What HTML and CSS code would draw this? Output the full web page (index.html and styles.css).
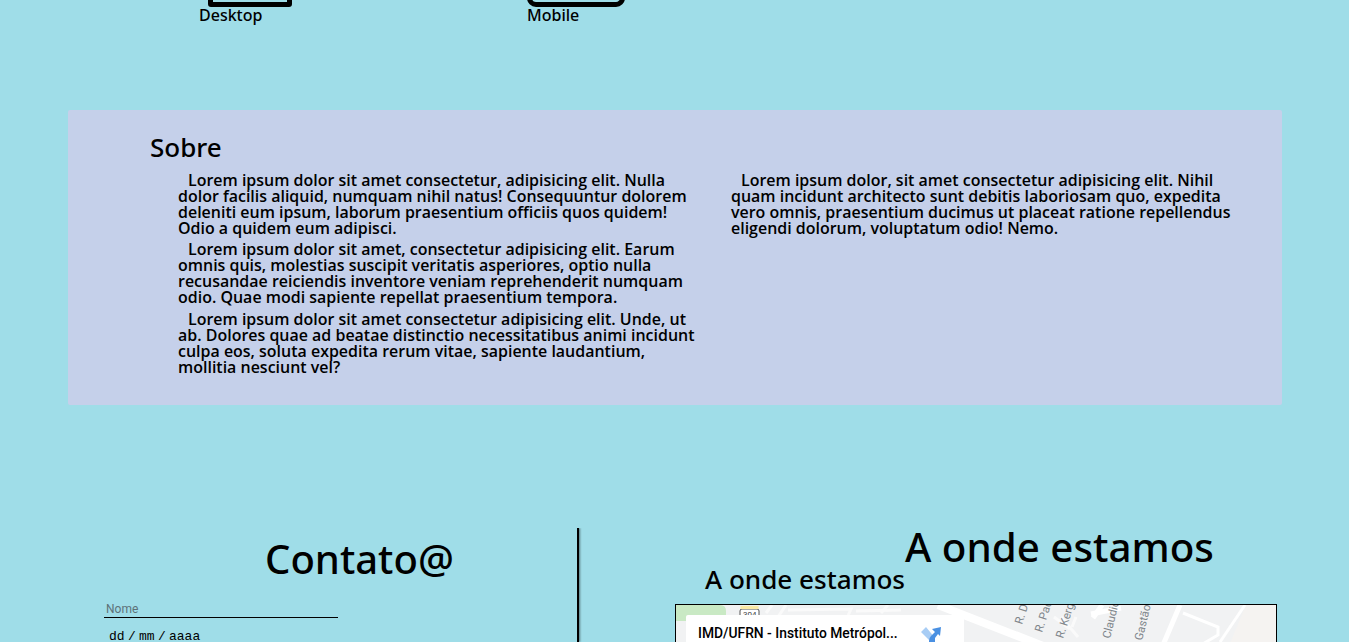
FILE: index.html
```html
<!DOCTYPE html>
<html lang="pt-BR">
<head>
<meta charset="utf-8">
<title>Sobre</title>
<link rel="stylesheet" href="styles.css">
</head>
<body>
<section class="devices">
  <div class="device device-desktop">
    <div class="device-cut"><div class="shape shape-desktop"></div></div>
    <span class="device-label">Desktop</span>
  </div>
  <div class="device device-mobile">
    <div class="device-cut"><div class="shape shape-mobile"></div></div>
    <span class="device-label">Mobile</span>
  </div>
</section>

<section class="about">
  <h2 class="about-title">Sobre</h2>
  <div class="about-cols">
    <div class="about-left">
      <p>Lorem ipsum dolor sit amet consectetur, adipisicing elit. Nulla dolor facilis aliquid, numquam nihil natus! Consequuntur dolorem deleniti eum ipsum, laborum praesentium officiis quos quidem! Odio a quidem eum adipisci.</p>
      <p>Lorem ipsum dolor sit amet, consectetur adipisicing elit. Earum omnis quis, molestias suscipit veritatis asperiores, optio nulla recusandae reiciendis inventore veniam reprehenderit numquam odio. Quae modi sapiente repellat praesentium tempora.</p>
      <p>Lorem ipsum dolor sit amet consectetur adipisicing elit. Unde, ut ab. Dolores quae ad beatae distinctio necessitatibus animi incidunt culpa eos, soluta expedita rerum vitae, sapiente laudantium, mollitia nesciunt vel?</p>
    </div>
    <div class="about-right">
      <p>Lorem ipsum dolor, sit amet consectetur adipisicing elit. Nihil quam incidunt architecto sunt debitis laboriosam quo, expedita vero omnis, praesentium ducimus ut placeat ratione repellendus eligendi dolorum, voluptatum odio! Nemo.</p>
    </div>
  </div>
</section>

<section class="bottom">
  <div class="contact">
    <h1 class="contact-title">Contato@</h1>
    <div class="field field-name"><span class="placeholder">Nome</span></div>
    <div class="field-date">dd / mm / aaaa</div>
  </div>
  <div class="where">
    <h1 class="where-title">A onde estamos</h1>
    <h2 class="where-sub">A onde estamos</h2>
    <div class="map">
      <svg class="map-art" viewBox="0 0 600 60" width="600" height="60" aria-hidden="true">
        <rect width="600" height="60" fill="#f1f2f3"/>
        <path d="M570 0 H600 V60 H545z" fill="#f5f3f1"/>
        <path d="M0 0h44q6 0 6 6v10H0z" fill="#c9e9c4"/>
        <g fill="none" stroke="#fafafa" stroke-width="3">
          <path d="M90 8 L96 0"/><path d="M102 12 L110 0"/><path d="M112 5 L175 4 L170 15"/>
          <path d="M205 8 L212 0"/><path d="M180 6 L225 5"/>
          <path d="M385 12 L402 32"/><path d="M378 12 L394 24"/><path d="M400 12 L396 22"/>
        </g>
        <g fill="none" stroke="#fff" stroke-width="8">
          <path d="M262 0 L380 46"/>
        </g>
        <g fill="none" stroke="#fff" stroke-width="5">
          <path d="M504 0 L487 40"/><path d="M417 13 L426 0"/><path d="M415 9 L445 3"/>
        </g>
        <g fill="none" stroke="#fff" stroke-width="3">
          <path d="M507 8 L542 22 L542 30 L525 40"/>
          <path d="M569 0 L544 37"/>
        </g>
        <rect x="64" y="4" width="19" height="14" rx="2" fill="#fff" stroke="#555"/>
        <rect x="64.500" y="1" width="18" height="3" fill="#f9e9a6"/>
        <text x="67" y="12" class="map-shield">304</text>
        <g class="map-street">
          <text transform="translate(346 20) rotate(-72)">R. Di</text>
          <text transform="translate(366 28) rotate(-72)">R. Pad</text>
          <text transform="translate(387 34) rotate(-72)">R. Kergi</text>
          <text transform="translate(434 34) rotate(-76)">Claudior</text>
          <text transform="translate(466 36) rotate(-76)">Gastão F</text>
        </g>
      </svg>
      <div class="map-card">
        <span class="map-card-title">IMD/UFRN - Instituto Metrópol...</span>
        <svg class="map-dir" viewBox="0 0 22 22" width="22" height="22" aria-hidden="true">
          <path d="M1 6 L6 1 L15 12 L15 22 L9 22 L9 14z" fill="#a8cdf5"/>
          <path d="M9 22 L9 15 Q9 12 11 10 L15 6 L12 3 L21 1 L20 10 L18 8 L15 12 L15 22z" fill="#4a90e2"/>
        </svg>
      </div>
    </div>
  </div>
</section>
</body>
</html>
```
FILE: styles.css
```css
* { box-sizing: border-box; }
html, body { height: 642px; overflow: hidden; }
body {
  margin: 0;
  background: #9fdde8;
  color: #000;
  font-family: "Noto Sans", "Open Sans", sans-serif;
}
h1, h2, p { margin: 0; }

.devices {
  display: flex;
  height: 110px;
  padding-left: 199px;
}
.device { display: flex; flex-direction: column; }
.device-desktop { width: 328px; }
.device-cut { height: 7px; overflow: hidden; display: flex; align-items: flex-end; }
.device-desktop .device-cut { margin-left: 9px; }
.shape { border: 5px solid #000; height: 30px; flex: none; }
.shape-desktop { width: 84px; border-radius: 0 0 3px 3px; }
.shape-mobile { width: 98px; border-radius: 0 0 9px 9px; }
.device-label { font-size: 16px; font-weight: 500; line-height: 17px; }

.about {
  margin: 0 67px 0 68px;
  height: 295px;
  background: #c5d0ea;
  border-radius: 2px;
  padding: 22px 0 0 82px;
}
.about-title { font-size: 26px; font-weight: 500; line-height: 30px; }
.about-cols {
  display: grid;
  grid-template-columns: 525px 505px;
  column-gap: 28px;
  margin: 10px 0 0 28px;
}
.about-left, .about-right {
  display: flex;
  flex-direction: column;
  gap: 5.4px;
  font-family: "Open Sans", sans-serif;
  font-size: 15.97px;
  font-weight: 600;
  line-height: 16px;
}
.about-left p, .about-right p { text-indent: 10px; }

.bottom {
  display: flex;
  margin-top: 123px;
  height: 114px;
  overflow: hidden;
}
.contact {
  width: 579px;
  padding: 7px 0 0 104px;
  border-right: 2px solid #000;
  box-shadow: 1px 0 2px rgba(0, 0, 0, .45);
}
.contact-title {
  font-size: 40px;
  font-weight: 500;
  line-height: 48px;
  padding-left: 161px;
}
.field-name {
  width: 234px;
  height: 17px;
  margin-top: 18px;
  border-bottom: 1px solid #000;
  padding-left: 2px;
}
.placeholder {
  display: block;
  font-family: Roboto, sans-serif;
  font-size: 12px;
  line-height: 16px;
  color: #5d7278;
}
.field-date {
  margin: 12px 0 0 5px;
  font-family: "Liberation Mono", monospace;
  font-size: 13px;
  line-height: 14px;
  word-spacing: -4.5px;
}
.where { flex: 1; padding: 0 0 0 96px; }
.where-title {
  font-size: 40.3px;
  font-weight: 500;
  line-height: 40px;
  margin-top: -1px;
  padding-left: 230px;
}
.where-sub {
  font-size: 26.1px;
  font-weight: 500;
  line-height: 30px;
  margin-top: -3px;
  padding-left: 30px;
}
.map {
  position: relative;
  width: 602px;
  height: 60px;
  margin-top: 10px;
  border: 1px solid #000;
  overflow: hidden;
}
.map-art { display: block; }
.map-shield { font-family: Roboto, sans-serif; font-size: 8px; fill: #444; }
.map-street { font-family: Roboto, sans-serif; font-size: 11.500px; fill: #80868b; }
.map-card {
  position: absolute;
  left: 10px;
  top: 10px;
  width: 278px;
  height: 60px;
  background: #fff;
  border-radius: 2px;
  padding: 9px 0 0 12px;
  display: flex;
  align-items: flex-start;
}
.map-card-title {
  font-family: Roboto, sans-serif;
  font-size: 13.85px;
  font-weight: 500;
  line-height: 18px;
  color: #000;
  width: 222px;
  flex: none;
}
.map-dir { margin-top: 2px; }
```
